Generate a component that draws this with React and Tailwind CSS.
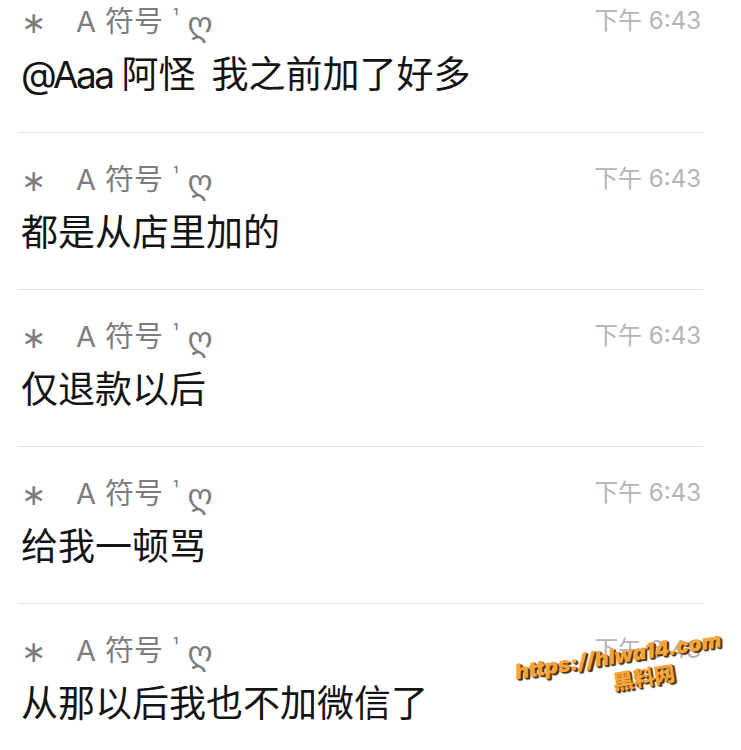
import React from "react";

const messages = [
  null,
  "都是从店里加的",
  "仅退款以后",
  "给我一顿骂",
  "从那以后我也不加微信了",
];

function FirstMsg() {
  return (
    <>
      <span className="tracking-[-2.5px]">@Aaa</span>
      <span className="ml-[9px]">阿怪</span>
      <span className="ml-[16px]">我之前加了好多</span>
    </>
  );
}

function Row({ text, first }) {
  return (
    <div
      className={
        first
          ? "pt-[5px] pb-[35px] pl-[3px] pr-[2px]"
          : "border-t border-[#e3e3e3] pt-[30px] pb-[34px] pl-[3px] pr-[2px]"
      }
    >
      <div className="flex h-[32px] items-start justify-between">
        <div className="flex h-[32px] items-baseline text-[29px] leading-[32px] text-[#7d7d7d]">
          <span className="inline-block w-[20px] translate-y-[1px] font-['DejaVu_Sans'] text-[30px] leading-[32px]">∗</span>
          <span className="ml-[35px]">A</span>
          <span className="ml-[9px]">符号</span>
          <span className="ml-[10px] inline-block -translate-y-[9px] text-[18px] leading-[32px]">¹</span>
          <span className="ml-[9px] inline-block translate-y-[3px] font-['DejaVu_Sans'] text-[32px] leading-[32px]">ღ</span>
        </div>
        <div className="text-[24px] leading-[32px] text-[#b4b4b4]">下午 6:43</div>
      </div>
      <div className="mt-[16px] h-[44px] text-[37px] leading-[44px] text-[#141414]">
        {first ? <FirstMsg /> : text}
      </div>
    </div>
  );
}

export default function App() {
  return (
    <div
      className="relative h-[750px] w-[741px] overflow-hidden bg-white"
      style={{ fontFamily: '"Inter", "Noto Sans CJK SC", "DejaVu Sans", sans-serif' }}
    >
      <div className="ml-[18px] w-[685px]">
        {messages.map((m, i) => (
          <Row key={i} text={m} first={i === 0} />
        ))}
      </div>
      <div className="pointer-events-none absolute left-[516px] top-[644px] flex -rotate-[9deg] flex-col items-center">
        <span
          className="text-[21px] font-black italic leading-[24px] text-[#f6a53a]"
          style={{ textShadow: "1px 1px 0 #5a3a10, 2px 2px 1px #3a2408" }}
        >
          https://hlwa14.com
        </span>
        <span
          className="ml-[44px] mt-[2px] text-[21px] font-black leading-[24px] text-[#f6a53a]"
          style={{ textShadow: "1px 1px 0 #5a3a10, 2px 2px 1px #3a2408" }}
        >
          黑料网
        </span>
      </div>
    </div>
  );
}
